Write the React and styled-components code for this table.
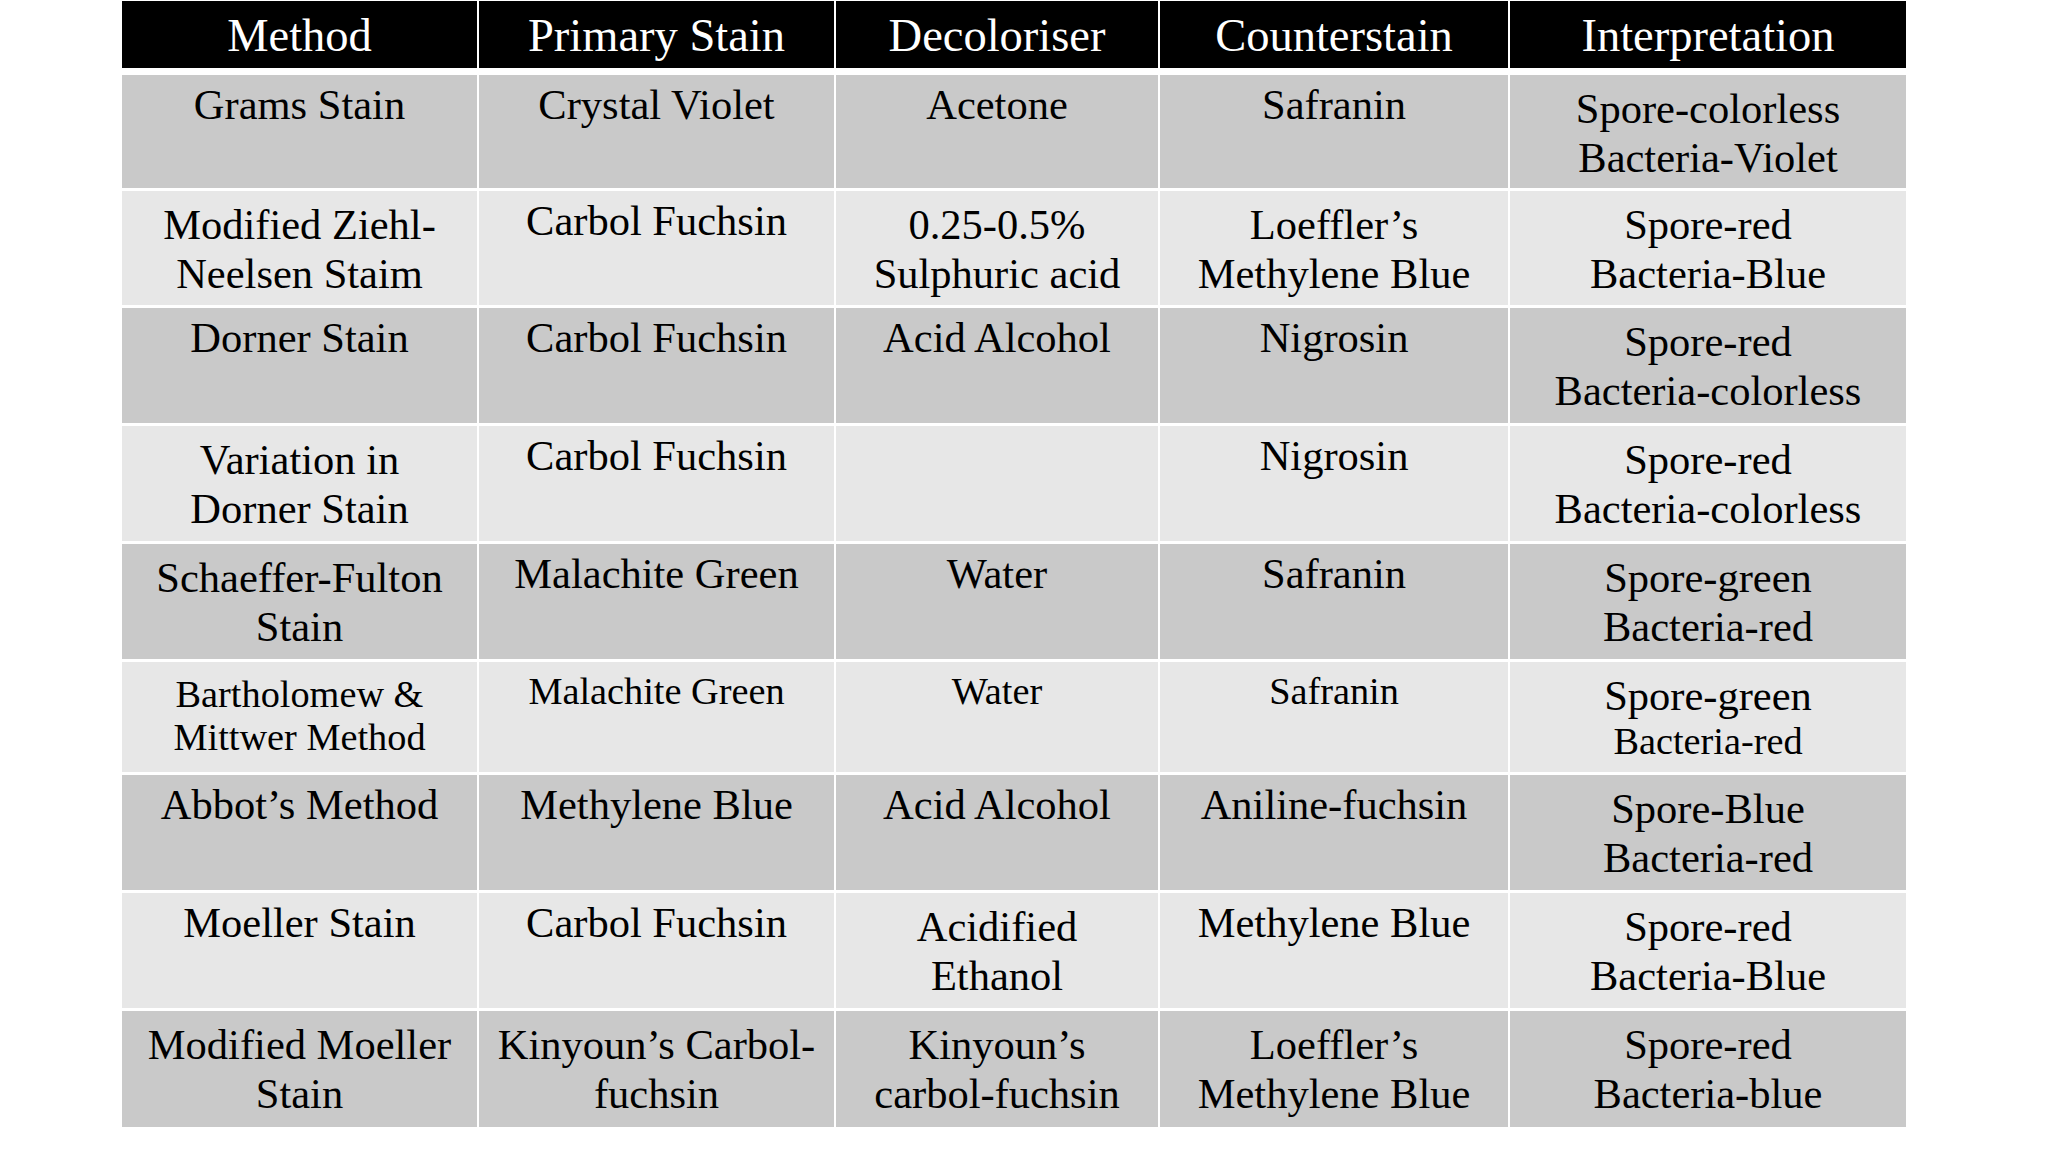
import React from 'react';
import styled, { createGlobalStyle } from 'styled-components';

const COLUMNS = '355px 355px 322px 348px 396px';

const headings = ['Method', 'Primary Stain', 'Decoloriser', 'Counterstain', 'Interpretation'];

// each cell is a list of lines; a line is text or { t, small }
const rows = [
  {
    h: 113,
    cells: [
      ['Grams Stain'],
      ['Crystal Violet'],
      ['Acetone'],
      ['Safranin'],
      ['Spore-colorless', 'Bacteria-Violet'],
    ],
  },
  {
    h: 114,
    cells: [
      ['Modified Ziehl-', 'Neelsen Staim'],
      ['Carbol Fuchsin'],
      ['0.25-0.5%', 'Sulphuric acid'],
      ['Loeffler’s', 'Methylene Blue'],
      ['Spore-red', 'Bacteria-Blue'],
    ],
  },
  {
    h: 115,
    cells: [
      ['Dorner Stain'],
      ['Carbol Fuchsin'],
      ['Acid Alcohol'],
      ['Nigrosin'],
      ['Spore-red', 'Bacteria-colorless'],
    ],
  },
  {
    h: 115,
    cells: [
      ['Variation in', 'Dorner Stain'],
      ['Carbol Fuchsin'],
      [],
      ['Nigrosin'],
      ['Spore-red', 'Bacteria-colorless'],
    ],
  },
  {
    h: 115,
    cells: [
      ['Schaeffer-Fulton', 'Stain'],
      ['Malachite Green'],
      ['Water'],
      ['Safranin'],
      ['Spore-green', 'Bacteria-red'],
    ],
  },
  {
    h: 110,
    cells: [
      [{ t: 'Bartholomew &', small: true }, { t: 'Mittwer Method', small: true }],
      [{ t: 'Malachite Green', small: true }],
      [{ t: 'Water', small: true }],
      [{ t: 'Safranin', small: true }],
      ['Spore-green', { t: 'Bacteria-red', small: true }],
    ],
  },
  {
    h: 115,
    cells: [
      ['Abbot’s Method'],
      ['Methylene Blue'],
      ['Acid Alcohol'],
      ['Aniline-fuchsin'],
      ['Spore-Blue', 'Bacteria-red'],
    ],
  },
  {
    h: 115,
    cells: [
      ['Moeller Stain'],
      ['Carbol Fuchsin'],
      ['Acidified', 'Ethanol'],
      ['Methylene Blue'],
      ['Spore-red', 'Bacteria-Blue'],
    ],
  },
  {
    h: 116,
    cells: [
      ['Modified Moeller', 'Stain'],
      ['Kinyoun’s Carbol-', 'fuchsin'],
      ['Kinyoun’s', 'carbol-fuchsin'],
      ['Loeffler’s', 'Methylene Blue'],
      ['Spore-red', 'Bacteria-blue'],
    ],
  },
];

const cellPad = (lines) => {
  const allSmall = lines.length > 0 && lines.every((l) => typeof l === 'object' && l.small);
  if (lines.length > 1) return allSmall ? 11 : 9;
  return allSmall ? 8 : 5;
};

export default function App() {
  return (
    <>
      <GlobalStyle />
      <Page>
        <Table>
          <HeaderRow>
            {headings.map((h) => (
              <HeadCell key={h}>{h}</HeadCell>
            ))}
          </HeaderRow>
          {rows.map((row, i) => (
            // eslint-disable-next-line react/no-array-index-key
            <Row key={i} $h={row.h}>
              {row.cells.map((lines, j) => (
                // eslint-disable-next-line react/no-array-index-key
                <Cell key={j} $dark={i % 2 === 0} $pad={cellPad(lines)}>
                  {lines.map((line) => {
                    const text = typeof line === 'string' ? line : line.t;
                    const small = typeof line === 'object' && line.small;
                    return (
                      <Line key={text} $small={small}>
                        {text}
                      </Line>
                    );
                  })}
                </Cell>
              ))}
            </Row>
          ))}
        </Table>
      </Page>
    </>
  );
}

// Style components
const GlobalStyle = createGlobalStyle`
  html, body {
    margin: 0;
    padding: 0;
    background: #ffffff;
  }
  body {
    font-family: "Liberation Serif", "Times New Roman", serif;
  }
`;

const Page = styled.div`
  width: 2048px;
  height: 1152px;
  padding: 1px 0 0 122px;
  box-sizing: border-box;
  background: #ffffff;
`;

const Table = styled.div`
  display: flex;
  flex-direction: column;
  gap: 3px;
  width: 1784px;
`;

const HeaderRow = styled.div`
  display: grid;
  grid-template-columns: ${COLUMNS};
  column-gap: 2px;
  height: 67px;
  margin-bottom: 4px;
`;

const HeadCell = styled.div`
  display: flex;
  align-items: center;
  justify-content: center;
  padding-top: 2px;
  box-sizing: border-box;
  background: #000000;
  color: #ffffff;
  font-size: 46.5px;
  line-height: 1.15;
  white-space: nowrap;
`;

const Row = styled.div`
  display: grid;
  grid-template-columns: ${COLUMNS};
  column-gap: 2px;
  height: ${(props) => props.$h}px;
`;

const Cell = styled.div`
  display: flex;
  flex-direction: column;
  align-items: center;
  padding-top: ${(props) => props.$pad}px;
  box-sizing: border-box;
  background: ${(props) => (props.$dark ? '#c9c9c9' : '#e7e7e7')};
  color: #000000;
  text-align: center;
`;

const Line = styled.span`
  display: block;
  white-space: nowrap;
  font-size: ${(props) => (props.$small ? '38.3px' : '42.5px')};
  line-height: ${(props) => (props.$small ? '43px' : '49px')};
`;
